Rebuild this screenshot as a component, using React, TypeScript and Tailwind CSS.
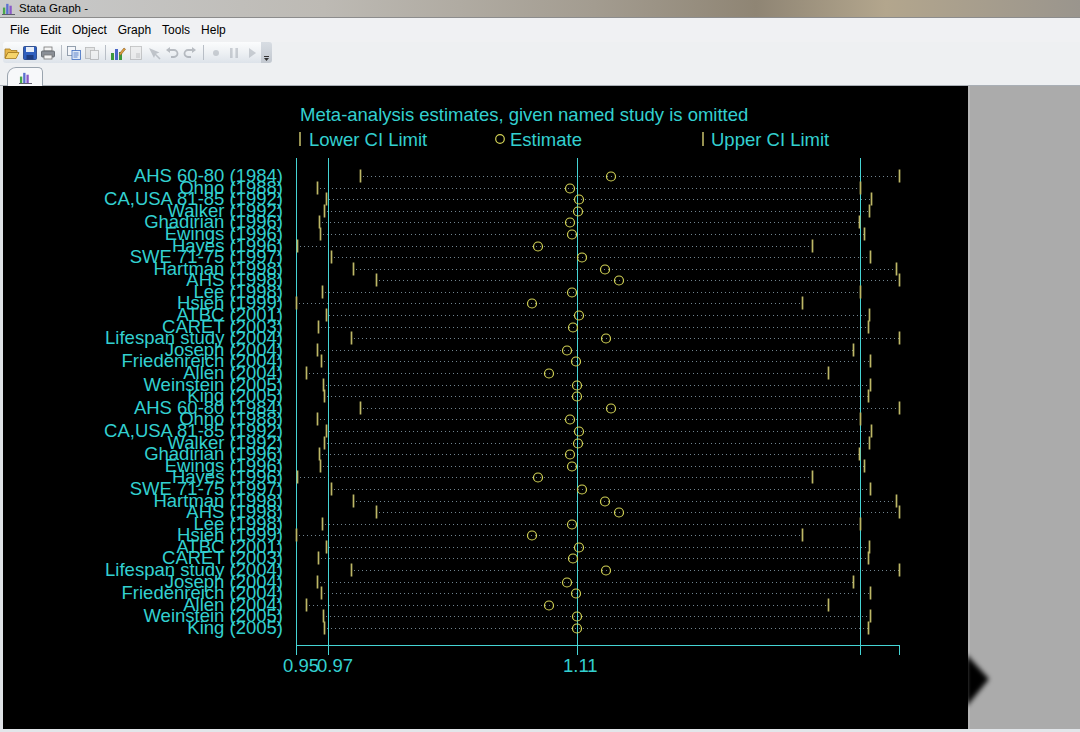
import React from 'react'

const studies = [
  'AHS 60-80 (1984)',
  'Ohno (1988)',
  'CA,USA 81-85 (1992)',
  'Walker (1992)',
  'Ghadirian (1996)',
  'Ewings (1996)',
  'Hayes (1996)',
  'SWE 71-75 (1997)',
  'Hartman (1998)',
  'AHS (1998)',
  'Lee (1998)',
  'Hsieh (1999)',
  'ATBC (2001)',
  'CARET (2003)',
  'Lifespan study (2004)',
  'Joseph (2004)',
  'Friedenreich (2004)',
  'Allen (2004)',
  'Weinstein (2005)',
  'King (2005)',
]

// [lower, estimate, upper] in page pixels
const points: [number, number, number][] = [
  [360, 611, 899],
  [317, 570, 860],
  [326, 579, 871],
  [324, 578, 869],
  [319, 570, 859],
  [320, 572, 864],
  [297, 538, 812],
  [331, 582, 870],
  [353, 605, 896],
  [376, 619, 899],
  [322, 572, 860],
  [296, 532, 802],
  [326, 579, 869],
  [318, 573, 868],
  [351, 606, 899],
  [317, 567, 853],
  [321, 576, 870],
  [306, 549, 828],
  [323, 577, 870],
  [324, 577, 868],
]

const rows = [...studies, ...studies].map((label, i) => ({
  label,
  y: Math.round(176 + i * 11.59) + 0.5,
  p: points[i % 20],
}))

const CYAN = '#33d0d0'
const LINE = '#45d4d4'
const MARK = '#bdb766'
const CIRC = '#d2d255'
const DOT = '#71848f'

function Plot() {
  return (
    <svg width="965" height="643" className="block">
      <g transform="translate(-3 -86)" fontFamily="'Liberation Sans', Arial, sans-serif">
        <text x="300" y="121" fontSize="18.5" fill={CYAN}>
          Meta-analysis estimates, given named study is omitted
        </text>
        {/* legend */}
        <line x1="300" y1="132" x2="300" y2="146" stroke={MARK} strokeWidth="1.6" />
        <text x="309" y="146" fontSize="18.5" fill={CYAN}>Lower CI Limit</text>
        <circle cx="500" cy="139" r="4.3" fill="none" stroke={CIRC} strokeWidth="1.2" />
        <text x="510" y="146" fontSize="18.5" fill={CYAN}>Estimate</text>
        <line x1="703" y1="132" x2="703" y2="146" stroke={MARK} strokeWidth="1.6" />
        <text x="711" y="146" fontSize="18.5" fill={CYAN}>Upper CI Limit</text>

        {/* dotted rows */}
        {rows.map((r, i) => (
          <line
            key={'d' + i}
            x1={r.p[0] + 3}
            y1={r.y}
            x2={r.p[2]}
            y2={r.y}
            stroke={DOT}
            strokeWidth="1"
            strokeDasharray="1 3"
            shapeRendering="crispEdges"
          />
        ))}

        {/* reference lines & axis */}
        <g stroke={LINE} strokeWidth="1" shapeRendering="crispEdges">
          <line x1="296.5" y1="158" x2="296.5" y2="655" />
          <line x1="328.5" y1="158" x2="328.5" y2="655" />
          <line x1="577.5" y1="158" x2="577.5" y2="655" />
          <line x1="860.5" y1="158" x2="860.5" y2="655" />
          <line x1="296" y1="645.5" x2="900" y2="645.5" />
          <line x1="899.5" y1="645" x2="899.5" y2="655" />
        </g>

        {/* markers */}
        {rows.map((r, i) => (
          <g key={'m' + i}>
            <line x1={r.p[0] + 0.5} y1={r.y - 7} x2={r.p[0] + 0.5} y2={r.y + 6} stroke={MARK} strokeWidth="1.7" />
            <line x1={r.p[2] + 0.5} y1={r.y - 7} x2={r.p[2] + 0.5} y2={r.y + 6} stroke={MARK} strokeWidth="1.7" />
            <circle cx={r.p[1]} cy={r.y} r="4.5" fill="none" stroke={CIRC} strokeWidth="1.2" />
          </g>
        ))}

        {/* study labels */}
        {rows.map((r, i) => (
          <text key={'t' + i} x="283" y={r.y + 5} fontSize="18.5" fill={CYAN} textAnchor="end">
            {r.label}
          </text>
        ))}

        {/* tick labels */}
        <text x="283" y="672" fontSize="18.5" fill={CYAN}>0.95</text>
        <text x="317" y="672" fontSize="18.5" fill={CYAN}>0.97</text>
        <text x="563" y="672" fontSize="18.5" fill={CYAN}>1.11</text>
      </g>
    </svg>
  )
}

function BarsIcon({ size = 14 }: { size?: number }) {
  return (
    <svg width={size} height={size} viewBox="0 0 14 14">
      <rect x="1" y="6" width="2.5" height="7" fill="#4aa84a" />
      <rect x="4.5" y="2" width="2.5" height="11" fill="#5a6fd0" />
      <rect x="8" y="4" width="2.5" height="9" fill="#8a5ac8" />
      <rect x="0" y="13" width="14" height="1" fill="#556" />
    </svg>
  )
}

const ico = 'w-[18px] h-[21px] flex items-center justify-center'

function Sep() {
  return (
    <div className="w-[8px] h-[21px] flex items-center justify-center">
      <div className="w-px h-[15px] bg-[#b8bec6]" />
    </div>
  )
}

function Toolbar() {
  return (
    <div className="h-[21px] flex items-center pl-[3px] bg-[#eef0f2]">
      <div className="flex items-center h-[21px] rounded-l-[3px] bg-[linear-gradient(180deg,#fbfcfd_0%,#eef1f4_50%,#dde3ea_100%)]">
        {/* open */}
        <div className={ico}>
          <svg width="16" height="16" viewBox="0 0 16 16">
            <path d="M1 4h5l1 1.5h6v2H4L1 13z" fill="#e8b84a" stroke="#a57a1e" strokeWidth="0.8" />
            <path d="M4 7.5h11l-3 6H1z" fill="#f6d46a" stroke="#a57a1e" strokeWidth="0.8" />
          </svg>
        </div>
        {/* save */}
        <div className={ico}>
          <svg width="16" height="16" viewBox="0 0 16 16">
            <rect x="1.5" y="1.5" width="13" height="13" rx="1" fill="#2f5fbf" stroke="#1d3c80" strokeWidth="0.8" />
            <rect x="4" y="2" width="8" height="5" fill="#e8eef8" />
            <rect x="4.5" y="10" width="7" height="4.5" fill="#1d3c80" />
          </svg>
        </div>
        {/* print */}
        <div className={ico}>
          <svg width="16" height="16" viewBox="0 0 16 16">
            <rect x="4" y="2" width="8" height="4" fill="#f4f4f4" stroke="#777" strokeWidth="0.8" />
            <rect x="1.5" y="6" width="13" height="6" rx="1" fill="#8a8f96" stroke="#5a5f66" strokeWidth="0.8" />
            <rect x="4" y="10" width="8" height="4" fill="#f4f4f4" stroke="#777" strokeWidth="0.8" />
          </svg>
        </div>
        <Sep />
        {/* copy */}
        <div className={ico}>
          <svg width="16" height="16" viewBox="0 0 16 16">
            <rect x="1.5" y="1.5" width="8" height="9" fill="#f4f6fa" stroke="#7d8a9c" strokeWidth="0.8" />
            <rect x="6" y="5.5" width="8.5" height="9" fill="#dfe9f7" stroke="#3d6bc0" strokeWidth="0.8" />
            <path d="M7.5 8h5M7.5 10h5M7.5 12h4" stroke="#3d6bc0" strokeWidth="0.8" />
          </svg>
        </div>
        {/* paste */}
        <div className={ico}>
          <svg width="16" height="16" viewBox="0 0 16 16" opacity="0.55">
            <rect x="1.5" y="2.5" width="9" height="11" fill="#d8d8d8" stroke="#888" strokeWidth="0.8" />
            <rect x="6.5" y="5.5" width="8" height="9" fill="#f0f0f0" stroke="#888" strokeWidth="0.8" />
          </svg>
        </div>
        <Sep />
        {/* chart editor */}
        <div className={ico}>
          <svg width="16" height="16" viewBox="0 0 16 16">
            <rect x="1" y="8" width="3" height="7" fill="#3c9a3c" />
            <rect x="5" y="4" width="3" height="11" fill="#4866c8" />
            <rect x="9" y="7" width="3" height="8" fill="#3c9a3c" />
            <path d="M9 9l5-6 1.5 1.2-5 6z" fill="#e0a040" stroke="#8a5a20" strokeWidth="0.6" />
          </svg>
        </div>
        {/* doc */}
        <div className={ico}>
          <svg width="16" height="16" viewBox="0 0 16 16" opacity="0.6">
            <rect x="2.5" y="1.5" width="11" height="13" fill="#eaeaea" stroke="#999" strokeWidth="0.8" />
            <rect x="8" y="8" width="4" height="5" fill="#c8c8c8" />
          </svg>
        </div>
        {/* pointer */}
        <div className={ico}>
          <svg width="16" height="16" viewBox="0 0 16 16" opacity="0.55">
            <path d="M3 3l5 10 1.5-4 4-1.5z" fill="#9aa0a8" />
            <path d="M9 9l5 5" stroke="#9aa0a8" strokeWidth="1.6" />
          </svg>
        </div>
        {/* undo */}
        <div className={ico}>
          <svg width="16" height="16" viewBox="0 0 16 16" fill="none" opacity="0.55">
            <path d="M5 5h5a3.5 3.5 0 010 7H7" stroke="#8a9098" strokeWidth="1.8" />
            <path d="M2 5l4-3v6z" fill="#8a9098" />
          </svg>
        </div>
        {/* redo */}
        <div className={ico}>
          <svg width="16" height="16" viewBox="0 0 16 16" fill="none" opacity="0.55">
            <path d="M11 5H6a3.5 3.5 0 000 7h3" stroke="#8a9098" strokeWidth="1.8" />
            <path d="M14 5l-4-3v6z" fill="#8a9098" />
          </svg>
        </div>
        <Sep />
        {/* record */}
        <div className={ico}>
          <svg width="16" height="16" viewBox="0 0 16 16" opacity="0.55">
            <circle cx="8" cy="8" r="3" fill="#a8aeb6" />
          </svg>
        </div>
        {/* pause */}
        <div className={ico}>
          <svg width="16" height="16" viewBox="0 0 16 16" opacity="0.55">
            <rect x="4" y="3" width="2.6" height="10" fill="#a8aeb6" />
            <rect x="9.4" y="3" width="2.6" height="10" fill="#a8aeb6" />
          </svg>
        </div>
        {/* play */}
        <div className={ico}>
          <svg width="16" height="16" viewBox="0 0 16 16" opacity="0.55">
            <path d="M5 3l7 5-7 5z" fill="#a8aeb6" />
          </svg>
        </div>
      </div>
      <div className="w-[11px] h-[21px] rounded-r-[3px] bg-[linear-gradient(180deg,#d8dde3_0%,#c2c8d0_100%)] flex flex-col items-center justify-end pb-[2px]">
        <div className="w-[5px] h-px bg-[#333] mb-[1px]" />
        <svg width="5" height="3" viewBox="0 0 5 3">
          <path d="M0 0h5L2.5 3z" fill="#333" />
        </svg>
      </div>
    </div>
  )
}

export default function App() {
  const menus = ['File', 'Edit', 'Object', 'Graph', 'Tools', 'Help']
  return (
    <div className="w-[1080px] h-[732px] flex flex-col overflow-hidden bg-[#eef0f2] font-['Liberation_Sans',Arial,sans-serif]">
      {/* title bar */}
      <div className="h-[18px] flex items-center pl-[2px] gap-[4px] bg-[linear-gradient(90deg,#c9cacb_0%,#bdbab4_30%,#a39c90_55%,#8f8574_70%,#b3a68d_82%,#9a958d_100%)] border-b border-[#8c8c8c]">
        <BarsIcon size={13} />
        <span className="text-[11.5px] text-black leading-none">Stata Graph -</span>
      </div>

      {/* menu bar */}
      <div className="h-[24px] flex items-center pl-[10px] gap-[11px] bg-[#f0f1f3] text-[12px] text-black">
        {menus.map((m) => (
          <span key={m}>{m}</span>
        ))}
      </div>

      <Toolbar />

      {/* tab strip */}
      <div className="h-[23px] flex items-end pl-[7px] bg-[#eef0f2] border-b border-[#a9afb6]">
        <div className="w-[36px] h-[19px] -mb-px flex items-center justify-center rounded-t-[5px] rounded-tl-[9px] border border-b-0 border-[#9aa4ae] bg-[#f7f8fa]">
          <BarsIcon size={13} />
        </div>
      </div>

      {/* main area */}
      <div className="flex-1 flex min-h-0">
        <div className="w-[3px] bg-[#dfe2e6]" />
        <div className="w-[965px] bg-black overflow-hidden">
          <Plot />
        </div>
        <div className="relative flex-1 bg-[#ababab] border-l-2 border-[#b6b6b6]">
          <svg className="absolute left-[-4px] top-[564px]" width="34" height="66">
            <defs>
              <filter id="blr" x="-50%" y="-50%" width="200%" height="200%">
                <feGaussianBlur stdDeviation="2.6" />
              </filter>
            </defs>
            <path d="M0 4L23 29L0 57z" fill="#000" filter="url(#blr)" />
          </svg>
        </div>
      </div>
      <div className="h-[3px] bg-[#e2e6ea]" />
    </div>
  )
}
